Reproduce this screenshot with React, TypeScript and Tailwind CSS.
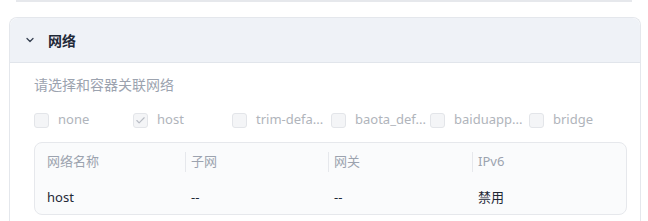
import { ChevronDown, Check } from 'lucide-react'

const networks = [
  { name: 'none', checked: false },
  { name: 'host', checked: true },
  { name: 'trim-defa...', checked: false },
  { name: 'baota_def...', checked: false },
  { name: 'baiduapp...', checked: false },
  { name: 'bridge', checked: false },
]

const columns = ['网络名称', '子网', '网关', 'IPv6']
const row = ['host', '--', '--', '禁用']

export default function App() {
  return (
    <div
      className="w-[648px] h-[221px] bg-white overflow-hidden"
      style={{ fontFamily: '"Noto Sans", "Noto Sans CJK SC", sans-serif' }}
    >
      <div className="mx-[16px] h-[2px] bg-[#e6e8ec]" />

      <div className="ml-[9px] mr-[7px] mt-[15px] rounded-t-[8px] border border-b-0 border-[#e4e7ec] h-[220px]">
        <div className="h-[45px] flex items-center bg-[#eff2f7] border-b border-[#e1e5eb] rounded-t-[8px] pl-[14px]">
          <ChevronDown size={12} strokeWidth={2.6} className="text-[#374151]" />
          <span className="ml-[12px] text-[14px] font-bold text-[#1f2937]">网络</span>
        </div>

        <div className="pl-[24px] pr-[12px]">
          <div className="mt-[13px] text-[14px] text-[#9ca3af] leading-[18px]">请选择和容器关联网络</div>

          <div className="mt-[17px] flex items-center h-[18px]">
            {networks.map((n) => (
              <div key={n.name} className="w-[99px] flex items-center shrink-0">
                <div className="w-[15px] h-[15px] rounded-[3px] border border-[#e3e5e9] bg-[#f4f5f7] flex items-center justify-center">
                  {n.checked && <Check size={11} strokeWidth={2.5} className="text-[#b8bcc4]" />}
                </div>
                <span className="ml-[9px] text-[13px] text-[#b0b4bb]">{n.name}</span>
              </div>
            ))}
          </div>

          <div className="mt-[13px] w-[593px] rounded-[8px] border border-[#e6e8ec] bg-[#fafbfc] grid grid-cols-[150px_143px_144px_1fr]">
            {columns.map((c, i) => (
              <div key={c} className="h-[38px] flex items-center">
                {i > 0 && <div className="w-px h-[20px] bg-[#e6e8ec]" />}
                <span className={`${i === 0 ? 'pl-[12px]' : 'pl-[5px]'} text-[13px] text-[#9ca3af]`}>{c}</span>
              </div>
            ))}
            {row.map((c, i) => (
              <div key={i} className={`h-[33px] flex items-center ${i === 0 ? 'pl-[12px]' : 'pl-[6px]'} text-[13px] text-[#1f2937]`}>
                {c}
              </div>
            ))}
          </div>
        </div>
      </div>
    </div>
  )
}
